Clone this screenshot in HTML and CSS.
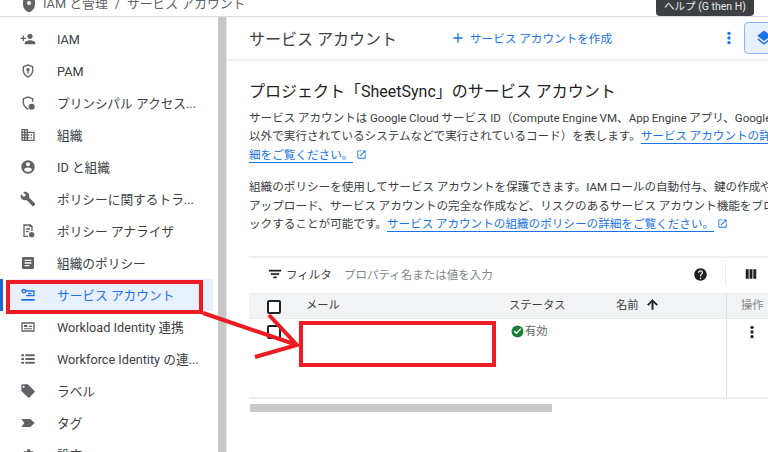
FILE: index.html
```html
<!DOCTYPE html>
<html lang="ja">
<head>
<meta charset="utf-8">
<title>サービス アカウント</title>
<link rel="stylesheet" href="styles.css">
</head>
<body>
<div class="page">
  <header class="crumbs">
    <svg class="crumb-icon" viewBox="0 0 24 24"><path fill-rule="evenodd" d="M12 1L3 5v6c0 5.550 3.840 10.740 9 12 5.160-1.260 9-6.450 9-12V5l-9-4zm0 5a3 3 0 1 1 0 6 3 3 0 0 1 0-6z"/></svg>
    <span>IAM と管理</span><span class="sep">/</span><span>サービス アカウント</span>
  </header>
  <div class="shell">
    <nav class="side">
      <ul class="nav">
        <li class="item latin"><svg class="ico" viewBox="0 0 24 24"><path d="M15 12c2.210 0 4-1.790 4-4s-1.790-4-4-4-4 1.790-4 4 1.790 4 4 4zm-9-2V7H4v3H1v2h3v3h2v-3h3v-2H6zm9 4c-2.670 0-8 1.340-8 4v2h16v-2c0-2.660-5.330-4-8-4z"/></svg><span>IAM</span></li>
        <li class="item latin"><svg class="ico" viewBox="0 0 24 24"><path fill-rule="evenodd" d="M12 2L4 5v6c0 5 3.400 9.700 8 11 4.600-1.300 8-6 8-11V5l-8-3zm0 2.200L18 6.500V11c0 3.900-2.500 7.600-6 8.900-3.500-1.300-6-5-6-8.900V6.500l6-2.300zM12 7.500a2.500 2.500 0 0 0-1 4.800V16h2v-3.700a2.500 2.500 0 0 0-1-4.800z"/></svg><span>PAM</span></li>
        <li class="item"><svg class="ico" viewBox="0 0 24 24"><path d="M12 2L4 5v6c0 5 3.400 9.700 8 11l1-.3V19.800c-.3.1-.7.1-1 .1-3.500-1.300-6-5-6-8.900V6.500l6-2.300 6 2.300V10h2V5l-8-3z"/><rect x="13" y="13" width="9" height="9" rx="4.500"/></svg><span>プリンシパル アクセス...</span></li>
        <li class="item"><svg class="ico" viewBox="0 0 24 24"><path d="M12 7V3H2v18h20V7H12zM6 19H4v-2h2v2zm0-4H4v-2h2v2zm0-4H4V9h2v2zm0-4H4V5h2v2zm4 12H8v-2h2v2zm0-4H8v-2h2v2zm0-4H8V9h2v2zm0-4H8V5h2v2zm10 12h-8v-2h2v-2h-2v-2h2v-2h-2V9h8v10zm-2-8h-2v2h2v-2zm0 4h-2v2h2v-2z"/></svg><span>組織</span></li>
        <li class="item"><svg class="ico" viewBox="0 0 24 24"><path d="M12 2C6.480 2 2 6.480 2 12s4.480 10 10 10 10-4.480 10-10S17.520 2 12 2zm0 3c1.660 0 3 1.340 3 3s-1.340 3-3 3-3-1.340-3-3 1.340-3 3-3zm0 14.200c-2.500 0-4.710-1.280-6-3.220.03-1.990 4-3.080 6-3.080 1.990 0 5.970 1.090 6 3.080-1.290 1.940-3.500 3.220-6 3.220z"/></svg><span>ID と組織</span></li>
        <li class="item"><svg class="ico" viewBox="0 0 24 24"><path d="M22.700 19l-9.100-9.100c.9-2.300.4-5-1.500-6.900-2-2-5-2.400-7.400-1.300L9 6 6 9 1.600 4.700C.4 7.100.9 10.100 2.900 12.100c1.900 1.900 4.600 2.400 6.900 1.500l9.100 9.100c.4.4 1 .4 1.400 0l2.300-2.300c.5-.4.5-1.100.1-1.400z"/></svg><span>ポリシーに関するトラ...</span></li>
        <li class="item"><svg class="ico" viewBox="0 0 24 24"><path d="M5 2h11l3 3v7h-2V6h-3V4H7v15h5v2H5V2zm4 6h6v2H9V8zm0 4h4v2H9v-2z"/><circle cx="17.500" cy="17.500" r="4"/></svg><span>ポリシー アナライザ</span></li>
        <li class="item"><svg class="ico" viewBox="0 0 24 24"><path d="M19 3H5c-1.100 0-2 .9-2 2v14c0 1.100.9 2 2 2h14c1.100 0 2-.9 2-2V5c0-1.100-.9-2-2-2zm-5 14H7v-2h7v2zm3-4H7v-2h10v2zm0-4H7V7h10v2z"/></svg><span>組織のポリシー</span></li>
        <li class="item active"><svg class="ico" viewBox="0 0 24 24"><path fill-rule="evenodd" d="M2 6.500a4 4 0 0 1 7.700-1.500H22v9H9v-2h11V7H9.700A4 4 0 0 1 2 6.500zm4-1.500a1.500 1.500 0 1 0 0 3 1.500 1.500 0 0 0 0-3zM12 9h5v2h-5V9zM2 18h20v2.500H2V18z"/></svg><span>サービス アカウント</span></li>
        <li class="item"><svg class="ico" viewBox="0 0 24 24"><path fill-rule="evenodd" d="M2 5h20v14H2V5zm2 2v10h16V7H4zm2 2h5v3H6V9zm7 1h5v2h-5v-2zM6 14h12v1.500H6V14z"/></svg><span>Workload Identity 連携</span></li>
        <li class="item"><svg class="ico" viewBox="0 0 24 24"><path d="M2 5h4v3H2zM8 5h14v3H8zM2 10.500h4v3H2zM8 10.500h14v3H8zM2 16h4v3H2zM8 16h14v3H8z"/></svg><span>Workforce Identity の連...</span></li>
        <li class="item"><svg class="ico" viewBox="0 0 24 24"><path d="M21.410 11.580l-9-9C12.050 2.220 11.550 2 11 2H4c-1.100 0-2 .9-2 2v7c0 .55.22 1.050.59 1.420l9 9c.36.36.86.58 1.410.58.55 0 1.050-.22 1.410-.59l7-7c.37-.36.59-.86.59-1.410 0-.55-.23-1.060-.59-1.420zM5.500 7C4.670 7 4 6.330 4 5.500S4.670 4 5.500 4 7 4.670 7 5.500 6.330 7 5.500 7z"/></svg><span>ラベル</span></li>
        <li class="item"><svg class="ico" viewBox="0 0 24 24"><path d="M2 6h13.500l6.500 6-6.500 6H2l4.500-6z"/></svg><span>タグ</span></li>
        <li class="item"><svg class="ico" viewBox="0 0 24 24"><path d="M19.400 13a7 7 0 0 0 0-2l2.100-1.600-2-3.500-2.500 1a7 7 0 0 0-1.700-1L15 3.300h-4l-.4 2.600a7 7 0 0 0-1.700 1l-2.500-1-2 3.500L6.500 11a7 7 0 0 0 0 2z"/></svg><span>設定</span></li>
      </ul>
      <div class="side-bar"></div>
    </nav>
    <main class="main">
      <div class="titlebar">
        <h1 class="title">サービス アカウント</h1>
        <a class="create"><svg class="plus" viewBox="0 0 24 24"><path d="M19 13h-6v6h-2v-6H5v-2h6V5h2v6h6v2z"/></svg>サービス アカウントを作成</a>
        <div class="title-tools">
          <svg class="kebab-blue" viewBox="0 0 24 24"><circle cx="12" cy="5" r="2.500"/><circle cx="12" cy="12" r="2.500"/><circle cx="12" cy="19" r="2.500"/></svg>
          <div class="learn"><svg class="learn-ico" viewBox="0 0 24 24"><path d="M11.990 18.540l-7.370-5.730L3 14.070l9 7 9-7-1.630-1.270-7.380 5.740zM12 16l7.360-5.730L21 9l-9-7-9 7 1.630 1.270L12 16z"/></svg></div>
        </div>
      </div>
      <section class="body">
        <h2 class="heading">プロジェクト「SheetSync」のサービス アカウント</h2>
        <p class="para">サービス アカウントは Google Cloud サービス ID（Compute Engine VM、App Engine アプリ、Google Cloud<br>以外で実行されているシステムなどで実行されているコード）を表します。<a class="link">サービス アカウントの詳</a><br><a class="link">細をご覧ください。</a> <svg class="ext" viewBox="0 0 24 24"><path d="M19 19H5V5h7V3H5c-1.110 0-2 .9-2 2v14c0 1.100.89 2 2 2h14c1.100 0 2-.9 2-2v-7h-2v7zM14 3v2h3.590l-9.830 9.830 1.410 1.410L19 6.410V10h2V3h-7z"/></svg></p>
        <p class="para">組織のポリシーを使用してサービス アカウントを保護できます。IAM ロールの自動付与、鍵の作成や<br>アップロード、サービス アカウントの完全な作成など、リスクのあるサービス アカウント機能をブロ<br>ックすることが可能です。<a class="link">サービス アカウントの組織のポリシーの詳細をご覧ください。</a> <svg class="ext" viewBox="0 0 24 24"><path d="M19 19H5V5h7V3H5c-1.110 0-2 .9-2 2v14c0 1.100.89 2 2 2h14c1.100 0 2-.9 2-2v-7h-2v7zM14 3v2h3.590l-9.830 9.830 1.410 1.410L19 6.410V10h2V3h-7z"/></svg></p>
        <div class="table">
          <div class="filter">
            <svg class="filter-ico" viewBox="0 0 24 24"><path d="M10 18h4v-2h-4v2zM3 6v2h18V6H3zm3 7h12v-2H6v2z"/></svg>
            <span class="filter-label">フィルタ</span>
            <span class="placeholder">プロパティ名または値を入力</span>
            <svg class="help" viewBox="0 0 24 24"><path d="M12 2C6.480 2 2 6.480 2 12s4.480 10 10 10 10-4.480 10-10S17.520 2 12 2zm1 17h-2v-2h2v2zm2.070-7.750l-.9.92C13.450 12.900 13 13.500 13 15h-2v-.5c0-1.100.45-2.100 1.170-2.830l1.240-1.260c.37-.36.59-.86.59-1.410 0-1.100-.9-2-2-2s-2 .9-2 2H8c0-2.210 1.790-4 4-4s4 1.790 4 4c0 .88-.36 1.680-.93 2.250z"/></svg>
            <div class="vline"></div>
            <svg class="cols" viewBox="0 0 24 24"><path d="M3 4h5v16H3zM9.500 4h5v16h-5zM16 4h5v16h-5z"/></svg>
          </div>
          <div class="row head">
            <div class="cell check-cell"><span class="check"></span></div>
            <div class="cell">メール</div>
            <div class="cell">ステータス</div>
            <div class="cell">名前<svg class="up" viewBox="0 0 24 24"><path d="M4 12l1.410 1.410L11 7.830V20h2V7.830l5.580 5.590L20 12l-8-8-8 8z"/></svg></div>
            <div class="cell action muted">操作</div>
          </div>
          <div class="row data">
            <div class="cell check-cell"><span class="check"></span></div>
            <div class="cell"></div>
            <div class="cell status"><svg class="ok" viewBox="0 0 24 24"><circle cx="12" cy="12" r="11" fill="#188038"/><path fill="#fff" d="M10 17l-5-5 1.800-1.800L10 13.400l7.200-7.200L19 8z"/></svg>有効</div>
            <div class="cell"></div>
            <div class="cell action"><svg class="kebab" viewBox="0 0 24 24"><circle cx="12" cy="5" r="2.500"/><circle cx="12" cy="12" r="2.500"/><circle cx="12" cy="19" r="2.500"/></svg></div>
          </div>
          <div class="hscroll"></div>
        </div>
      </section>
    </main>
  </div>
  <div class="tooltip">ヘルプ (G then H)</div>
  <div class="mark mark-nav"></div>
  <div class="mark mark-row"></div>
  <svg class="arrow" viewBox="0 0 768 452"><path d="M203 313L297 345M269 315L297 345L255 357"/></svg>
</div>
</body>
</html>
```

FILE: styles.css
```css
* { box-sizing: border-box; }
html, body { margin: 0; padding: 0; height: 100%; overflow: hidden; background: #fff; }
body { font-family: Roboto, "Noto Sans CJK JP", "Liberation Sans", sans-serif; color: #3c4043; }
.page { position: relative; width: 768px; height: 452px; overflow: hidden; display: flex; flex-direction: column; }

.crumbs { height: 17px; flex: none; display: flex; align-items: flex-end; gap: 6px; padding: 0 0 1px 21px; border-bottom: 1px solid #dadce0; font-size: 12.800px; line-height: 22px; color: #5f6368; white-space: nowrap; overflow: hidden; }
.crumb-icon { width: 16px; height: 16px; flex: none; margin: 0 0 2px 0; fill: #5f6368; }
.sep { margin: 0 1px; }

.shell { flex: 1; display: flex; min-height: 0; }
.side { width: 227px; flex: none; display: flex; border-right: 1px solid #e4e5e7; overflow: hidden; }
.nav { list-style: none; margin: 0; padding: 6px 5px 0 0; width: 218px; flex: none; }
.item { height: 32px; display: flex; align-items: center; gap: 21px; padding-left: 20px; font-size: 12.700px; color: #3c4043; white-space: nowrap; }
.item span { margin-bottom: 2px; }
.item.latin span { margin-bottom: 0; }
.item .ico { width: 16px; height: 16px; flex: none; fill: #5f6368; }
.item.active { color: #1a73e8; background: #e8f0fe; box-shadow: inset 3px 0 0 #1967d2, inset 6px 0 0 #fff; }
.item.active .ico { fill: #1a73e8; }
.side-bar { width: 8px; flex: none; background: #c8c8c8; }

.main { flex: 1; min-width: 0; overflow: hidden; }
.titlebar { height: 44px; display: flex; align-items: center; padding: 0 0 1px 22px; border-bottom: 2px solid #eeeff0; white-space: nowrap; }
.title { margin: 0; width: 201px; flex: none; font-size: 16px; font-weight: 400; color: #3c4043; }
.create { display: flex; align-items: center; gap: 4px; font-size: 11.600px; color: #1a73e8; width: 271px; flex: none; }
.plus { width: 16px; height: 16px; fill: #1a73e8; }
.title-tools { display: flex; align-items: center; gap: 7px; }
.kebab-blue { width: 16px; height: 16px; fill: #1a73e8; flex: none; }
.learn { width: 40px; height: 32px; flex: none; border: 1px solid #8ab4f8; border-radius: 4px; background: #e8f0fe; display: flex; align-items: center; padding-left: 10px; }
.learn-ico { width: 18px; height: 18px; fill: #1a73e8; }

.body { padding: 21px 0 0 22px; }
.heading { margin: 0 0 7px; font-size: 16px; line-height: 20px; font-weight: 400; color: #202124; white-space: nowrap; }
.para { margin: 0 0 14.500px; font-size: 11.600px; line-height: 18.300px; color: #3c4043; white-space: nowrap; word-spacing: -.4px; }
.link { color: #1a73e8; border-bottom: 1px solid #1a73e8; }
.ext { width: 11px; height: 11px; fill: #1a73e8; vertical-align: -1px; }

.table { margin-top: 22.700px; width: 560px; }
.filter { height: 37px; display: flex; align-items: center; padding: 0 0 2px 18px; border-top: 2px solid #eeeff0; font-size: 11.500px; }
.filter-ico { width: 16px; height: 16px; flex: none; fill: #202124; stroke: #202124; stroke-width: .7; }
.filter-label { margin-left: 3px; width: 58px; flex: none; color: #3c4043; }
.placeholder { width: 349px; flex: none; color: #80868b; }
.help { width: 15px; height: 15px; flex: none; fill: #202124; }
.vline { width: 1px; height: 22px; margin-left: 17px; flex: none; background: #e8eaed; }
.cols { width: 14px; height: 14px; margin-left: 18px; flex: none; fill: #202124; }

.row { display: grid; grid-template-columns: 57px 203px 107px 110px 83px; font-size: 11.300px; }
.cell { display: flex; align-items: center; min-width: 0; white-space: nowrap; }
.check-cell { padding-left: 18px; }
.head { height: 26px; background: #f1f3f4; border-top: 1px solid #e8eaed; border-bottom: 1px solid #e8eaed; color: #3c4043; }
.head .cell { padding-bottom: 3px; }
.head .check-cell { padding: 2px 0 0 18px; }
.data { height: 80px; border-bottom: 2px solid #eeeff0; align-items: stretch; }
.data .cell { align-items: flex-start; padding-top: 6px; }
.check { width: 14px; height: 14px; flex: none; border: 2px solid #202124; border-radius: 2px; background: #fff; }
.up { width: 15px; height: 15px; margin-left: 6px; fill: #202124; stroke: #202124; stroke-width: 1; }
.action { border-left: 1px solid #e0e0e0; padding-left: 14px; }
.muted { color: #80868b; }
.data .status { color: #5f6368; gap: 1px; padding: 3px 0 0 2px; }
.ok { width: 13px; height: 13px; flex: none; margin-top: 3px; }
.data .action { padding: 5px 0 0 17px; }
.kebab { width: 16px; height: 16px; fill: #202124; }
.hscroll { width: 302px; height: 8px; margin: 5px 0 0 1px; background: #c8c8c8; }

.tooltip { position: absolute; left: 656px; top: 0; width: 98px; height: 16px; background: #3c4043; color: #e8eaed; border-radius: 0 0 4px 4px; font-size: 10.500px; line-height: 13px; text-align: center; white-space: nowrap; }
.mark { position: absolute; border: 4px solid #ed1c24; }
.mark-nav { left: 6px; top: 280px; width: 197px; height: 34px; }
.mark-row { left: 299px; top: 321px; width: 197px; height: 46px; }
.arrow { position: absolute; left: 0; top: 0; width: 768px; height: 452px; fill: none; stroke: #ed1c24; stroke-width: 4; pointer-events: none; }
```
